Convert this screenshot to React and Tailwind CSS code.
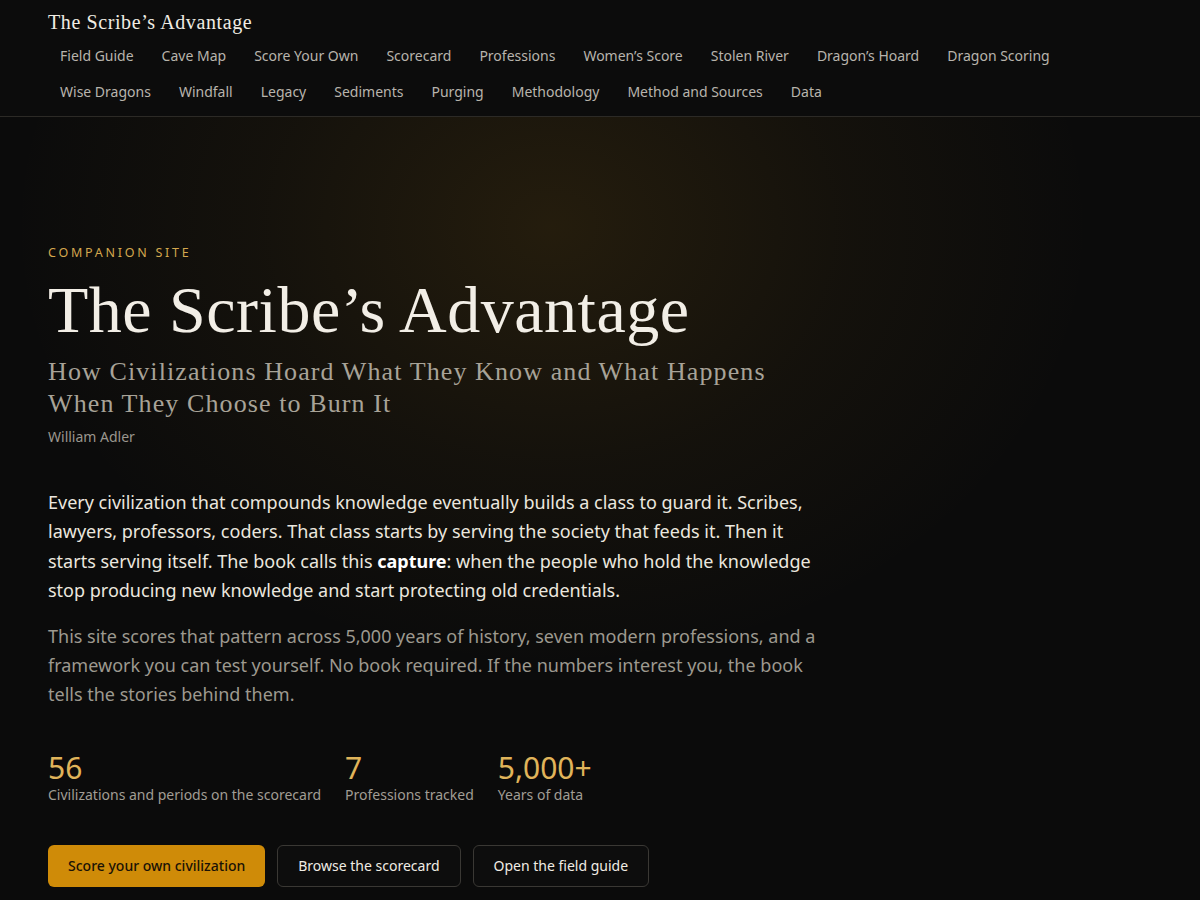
import React from "react";

const sans = { fontFamily: '"Noto Sans", "Open Sans", sans-serif' };
const serif = { fontFamily: '"Liberation Serif", "Times New Roman", serif' };

const row1 = ["Field Guide", "Cave Map", "Score Your Own", "Scorecard", "Professions", "Women’s Score", "Stolen River", "Dragon’s Hoard", "Dragon Scoring"];
const row2 = ["Wise Dragons", "Windfall", "Legacy", "Sediments", "Purging", "Methodology", "Method and Sources", "Data"];

export default function App() {
  return (
    <div className="min-h-[900px] bg-[#0b0b0b] text-[#eeeae2]" style={sans}>
      <header className="bg-[#0c0c0c] border-b border-[#2c2a26] px-12 pt-[10px] pb-[11px]">
        <div className="text-[20px] leading-[24px] tracking-[0.6px] text-[#f0ece4]" style={serif}>The Scribe’s Advantage</div>
        <nav className="mt-[9px] pl-3 flex flex-col gap-[10px] text-[14px] leading-[26px] text-[#b8b4ac]">
          <div className="flex gap-[28px]">
            {row1.map((t) => <a key={t}>{t}</a>)}
          </div>
          <div className="flex gap-[28px]">
            {row2.map((t) => <a key={t}>{t}</a>)}
          </div>
        </nav>
      </header>
      <main
        className="px-12 pt-[128px] pb-[13px]"
        style={{ backgroundImage: "radial-gradient(ellipse 540px 440px at 46% 14%, rgba(190,135,25,0.14), rgba(190,135,25,0.05) 55%, transparent 100%)" }}
      >
        <div className="max-w-[772px]">
          <div className="text-[12.5px] tracking-[0.22em] text-[#d4a74e] leading-[16px]">COMPANION SITE</div>
          <h1 className="mt-[9px] text-[66px] leading-[80px] tracking-[0.5px] text-[#f2eee6]" style={serif}>The Scribe’s Advantage</h1>
          <h2 className="mt-[6px] text-[26px] leading-[32px] tracking-[1.1px] text-[#a8a398]" style={serif}>How Civilizations Hoard What They Know and What Happens When They Choose to Burn It</h2>
          <div className="mt-[7px] text-[14px] leading-[20px] text-[#9a968e]">William Adler</div>
          <p className="mt-[41px] w-[772px] text-[18px] leading-[29.4px] text-[#ebe7df]">
            Every civilization that compounds knowledge eventually builds a class to guard it. Scribes, lawyers, professors, coders. That class starts by serving the society that feeds it. Then it starts serving itself. The book calls this <strong className="font-bold text-white">capture</strong>: when the people who hold the knowledge stop producing new knowledge and start protecting old credentials.
          </p>
          <p className="mt-[16px] w-[772px] text-[18px] leading-[29.4px] text-[#9d998f]">
            This site scores that pattern across 5,000 years of history, seven modern professions, and a framework you can test yourself. No book required. If the numbers interest you, the book tells the stories behind them.
          </p>
          <div className="mt-[41px] flex gap-6">
            {[["56", "Civilizations and periods on the scorecard"], ["7", "Professions tracked"], ["5,000+", "Years of data"]].map(([n, l]) => (
              <div key={n} className="flex flex-col">
                <span className="text-[30px] leading-[34px] text-[#e0b45a]">{n}</span>
                <span className="text-[14px] leading-[20px] text-[#a19d94]">{l}</span>
              </div>
            ))}
          </div>
          <div className="mt-[40px] flex gap-3 text-[14px]">
            <button className="h-[42px] px-5 rounded-md bg-[#cf8b08] text-[#1a1206] font-medium">Score your own civilization</button>
            <button className="h-[42px] px-5 rounded-md border border-[#3a3834] bg-[#0d0d0d] text-[#f0ece4]">Browse the scorecard</button>
            <button className="h-[42px] px-5 rounded-md border border-[#3a3834] bg-[#0d0d0d] text-[#f0ece4]">Open the field guide</button>
          </div>
        </div>
      </main>
    </div>
  );
}
